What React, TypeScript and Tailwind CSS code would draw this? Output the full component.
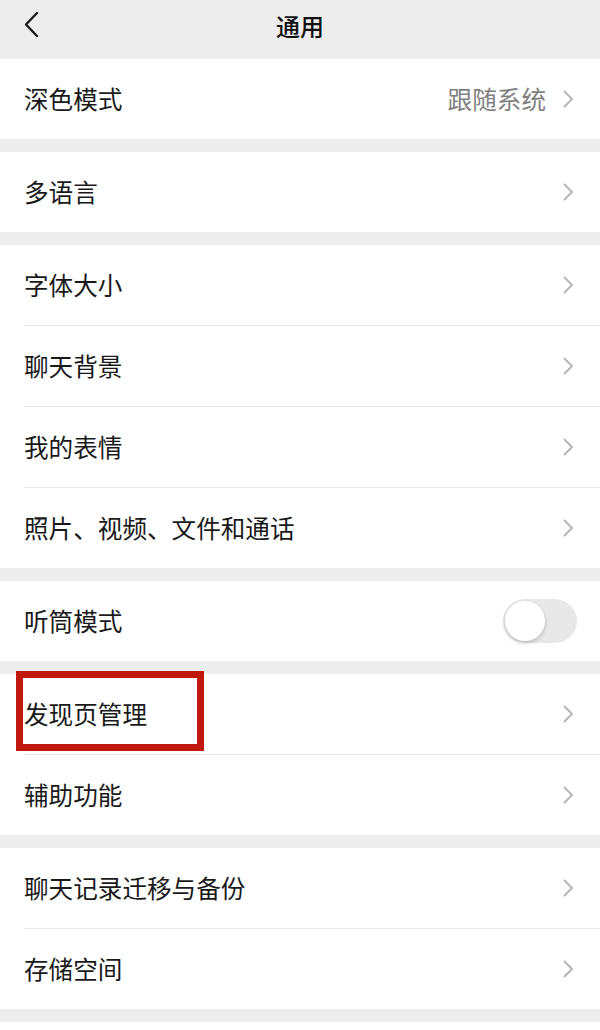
import React from 'react';

const font = { fontFamily: '"Noto Sans CJK SC", "Noto Sans", sans-serif' };

function Chevron() {
  return (
    <svg width="12" height="20" viewBox="0 0 12 20" fill="none" className="shrink-0">
      <path d="M2.5 2.5l7.5 7.5-7.5 7.5" stroke="#b4b4b4" strokeWidth="1.8" strokeLinecap="round" strokeLinejoin="round" />
    </svg>
  );
}

function Row({ label, value, divider, children }: { label: string; value?: string; divider?: boolean; children?: React.ReactNode }) {
  return (
    <div className="relative">
      {divider && <div className="ml-6 h-px bg-[#e6e6e6]" />}
      <div className="flex h-20 items-center pl-6 pr-[26px]">
        <span className="flex-1 pb-[1px] text-[24.6px] text-[#191919]">{label}</span>
        {value && <span className="mr-[16px] pb-[1px] text-[24.6px] text-[#7f7f7f]">{value}</span>}
        {children ?? <Chevron />}
      </div>
    </div>
  );
}

function Toggle() {
  return (
    <div className="relative mr-[-3px] h-[44px] w-[74px] rounded-full bg-[#e8e8e8]">
      <div className="absolute left-[2px] top-[2px] h-[40px] w-[40px] rounded-full bg-white shadow-[0_2px_4px_rgba(0,0,0,0.2)]" />
    </div>
  );
}

export default function App() {
  return (
    <div className="min-h-[1030px] w-[600px] bg-white" style={font}>
      <div className="relative flex h-[59px] items-center justify-center bg-[#ededed] pb-[7px]">
        <svg width="18" height="28" viewBox="0 0 18 28" fill="none" className="absolute left-[22px] top-[11px]">
          <path d="M15 2L4 13.5 15 25" stroke="#1a1a1a" strokeWidth="2.4" strokeLinecap="round" strokeLinejoin="round" />
        </svg>
        <span className="text-[24px] font-medium text-[#111]">通用</span>
      </div>

      <Row label="深色模式" value="跟随系统" />
      <div className="h-[13px] bg-[#ededed]" />
      <Row label="多语言" />
      <div className="h-[13px] bg-[#ededed]" />
      <Row label="字体大小" />
      <Row label="聊天背景" divider />
      <Row label="我的表情" divider />
      <Row label="照片、视频、文件和通话" divider />
      <div className="h-[13px] bg-[#ededed]" />
      <Row label="听筒模式">
        <Toggle />
      </Row>
      <div className="h-[13px] bg-[#ededed]" />
      <div className="relative">
        <Row label="发现页管理" />
        <div className="pointer-events-none absolute left-[16px] top-[-3px] h-[80px] w-[188px] border-[7px] border-[#c0170f]" />
      </div>
      <Row label="辅助功能" divider />
      <div className="h-[13px] bg-[#ededed]" />
      <Row label="聊天记录迁移与备份" />
      <Row label="存储空间" divider />
      <div className="h-[13px] bg-[#ededed]" />
    </div>
  );
}
